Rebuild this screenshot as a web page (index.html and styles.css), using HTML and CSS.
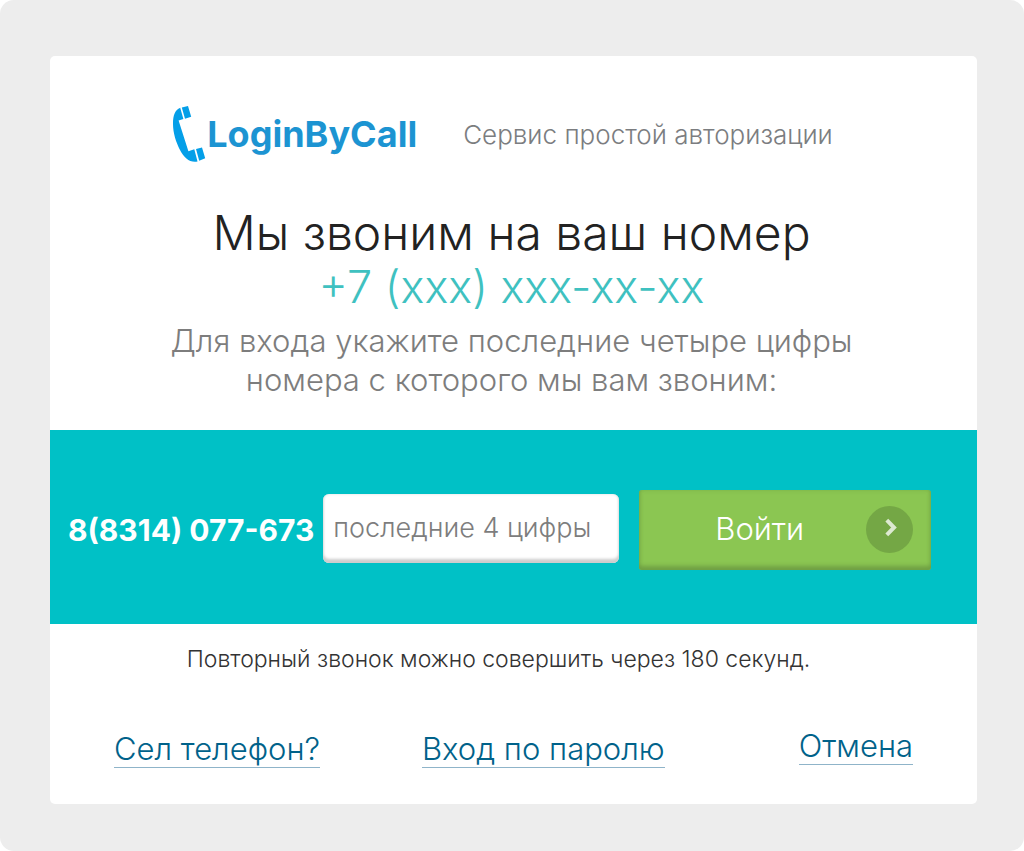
FILE: index.html
```html
<!DOCTYPE html>
<html lang="ru">
<head>
<meta charset="utf-8">
<meta name="viewport" content="width=device-width, initial-scale=1">
<title>LoginByCall</title>
<link rel="stylesheet" href="styles.css">
</head>
<body>
<div class="backdrop">
  <main class="dialog">
    <header class="brand">
      <div class="logo">
        <svg class="logo-icon" viewBox="0 0 34 58" aria-hidden="true">
          <path d="M8.2 2.7 11.4 14 6.6 15.4 16.4 46.2 22.3 44.3 25.5 56.5C18 58 12 53 8 45 4 37 1 28 1 19 1 10 3 5 8.2 2.7ZM9.8 2.5 16 1 19.2 11.7 13 13.7ZM24 44 30 42.5 33.2 53.3 27.2 55.7Z"/>
        </svg>
        <span class="logo-text">LoginByCall</span>
      </div>
      <p class="tagline">Сервис простой авторизации</p>
    </header>
    <section class="intro">
      <h1 class="title">Мы звоним на ваш номер</h1>
      <p class="phone">+7 (xxx) xxx-xx-xx</p>
      <p class="hint">Для входа укажите последние четыре цифры<br>номера с которого мы вам звоним:</p>
    </section>
    <form class="login">
      <label class="prefix" for="digits">8(8314) 077-673</label>
      <input class="digits" id="digits" type="text" inputmode="numeric" maxlength="4" placeholder="последние 4 цифры">
      <button class="submit" type="submit">
        <span class="submit-label">Войти</span>
        <svg class="submit-icon" viewBox="0 0 47 47" aria-hidden="true">
          <circle cx="23.5" cy="23.5" r="23.5" fill="#74a745"/>
          <path d="M20.8 14.2 28 21.5 20.8 28.8" fill="none" stroke="#dde9d1" stroke-width="4"/>
        </svg>
      </button>
    </form>
    <p class="timer">Повторный звонок можно совершить через 180 секунд.</p>
    <nav class="links">
      <a class="link" href="#phone">Сел телефон?</a>
      <a class="link link-password" href="#password">Вход по паролю</a>
      <a class="link link-cancel" href="#cancel">Отмена</a>
    </nav>
  </main>
</div>
</body>
</html>
```
FILE: styles.css
```css
* {
  box-sizing: border-box;
}

body {
  margin: 0;
  background: #fff;
  font-family: Inter, "Open Sans", sans-serif;
  font-weight: 300;
}

h1,
p {
  margin: 0;
  font-weight: 300;
}

.backdrop {
  min-height: 100vh;
  padding: 56px 47px 47px 50px;
  border-radius: 14px;
  background: #ededed;
}

.dialog {
  padding-bottom: 36px;
  border-radius: 5px;
  background: #fff;
}

.brand {
  display: flex;
  justify-content: center;
  align-items: center;
  gap: 46px;
  padding: 49px 22px 0 0;
}

.logo {
  display: flex;
  align-items: center;
  gap: 1px;
}

.logo-icon {
  width: 34px;
  height: 58px;
  fill: #049fe8;
}

.logo-text {
  color: #1c94d2;
  font-size: 36px;
  font-weight: 700;
}

.tagline {
  color: #7b7d80;
  font-size: 26px;
}

.intro {
  padding: 42px 4px 31px 0;
  text-align: center;
}

.title {
  color: #222;
  font-size: 48px;
  line-height: 56px;
}

.phone {
  color: #3fc1c0;
  font-size: 45px;
  line-height: 52px;
}

.hint {
  padding-top: 8px;
  color: #7d7d7d;
  font-size: 31px;
  line-height: 39px;
}

.login {
  display: flex;
  align-items: center;
  padding: 60px 46px 54px 18px;
  background: #00c1c6;
}

.prefix {
  color: #fff;
  font-size: 30px;
  font-weight: 700;
}

.digits {
  width: 296px;
  height: 69px;
  margin: 0 20px 4px 9px;
  padding: 0 10px 2px;
  border: 0;
  border-radius: 6px;
  background: #fff;
  box-shadow: inset 0 -4px 3px #cdcdcd, inset 0 0 3px #ddd;
  color: #555;
  font: inherit;
  font-size: 27px;
}

.digits::placeholder {
  color: #7d7d7d;
  opacity: 1;
}

.submit {
  display: flex;
  flex: 1;
  align-items: center;
  height: 80px;
  padding: 0 18px 2px;
  border: 0;
  border-radius: 3px;
  background: #8bc652;
  box-shadow: inset 0 -4px 4px #70a044, inset 0 0 4px #7cb247;
  color: #fff;
  font: inherit;
  font-size: 31px;
}

.submit-label {
  flex: 1;
  padding: 0 4px 2px 0;
}

.submit-icon {
  width: 47px;
  height: 47px;
}

.timer {
  padding: 20px 30px 0 0;
  color: #333;
  font-size: 23px;
  line-height: 30px;
  text-align: center;
}

.links {
  display: flex;
  align-items: flex-start;
  justify-content: space-between;
  padding: 54px 64px 0;
}

.link {
  margin-top: 3px;
  border-bottom: 1px solid #8fb4c9;
  color: #00628a;
  font-size: 31px;
  line-height: 36px;
  text-decoration: none;
}

.link-password {
  margin-right: 32px;
}

.link-cancel {
  margin-top: 0;
}
```
